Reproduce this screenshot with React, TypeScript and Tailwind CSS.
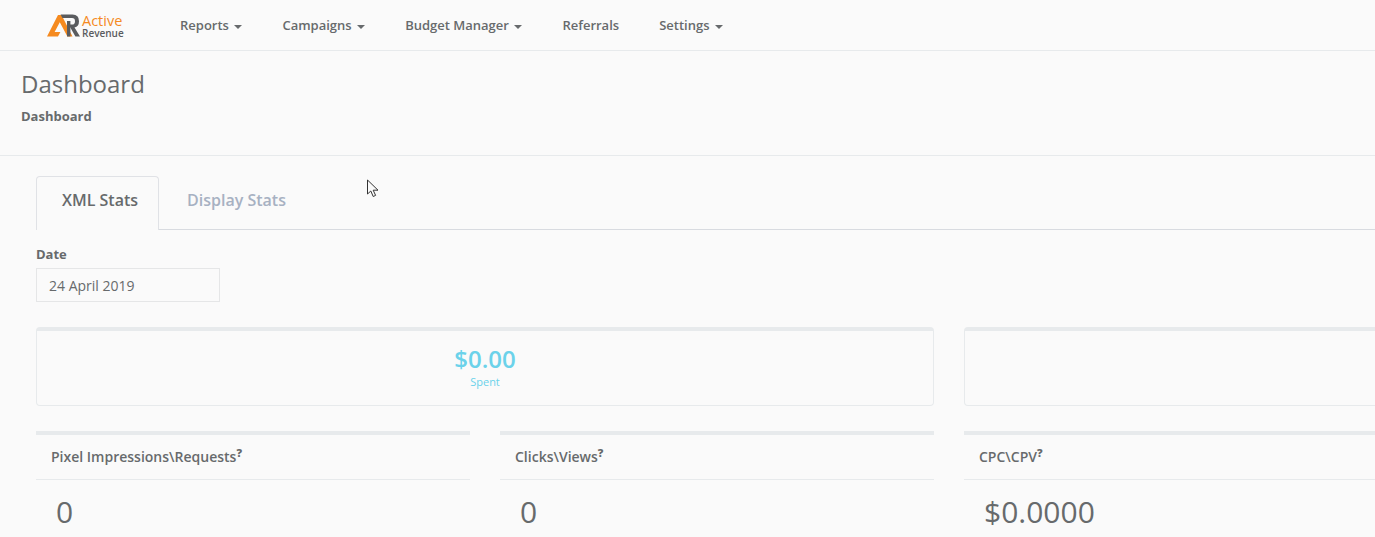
const navItems = [
  { label: "Reports", caret: true },
  { label: "Campaigns", caret: true },
  { label: "Budget Manager", caret: true },
  { label: "Referrals", caret: false },
  { label: "Settings", caret: true },
];

const stats = [
  { title: "Pixel Impressions\\Requests", value: "0" },
  { title: "Clicks\\Views", value: "0" },
  { title: "CPC\\CPV", value: "$0.0000" },
];

function Logo() {
  return (
    <div className="flex w-[76px] items-center">
      <svg width="35" height="23" viewBox="0 0 35 23" className="block shrink-0">
        <path d="M0 22.5 L11 1 L14.5 1 L25.5 22.5 L20.4 22.5 L12.8 8.2 L7.6 18 L13.4 18 L11 22.5 Z" fill="#f58a1f" />
        <path d="M13.6 0.5 L25.5 0.5 Q32 0.5 32 7.2 Q32 12.4 27.5 13.4 L33 22.5 L28.4 22.5 L21.6 10.6 L25 10.6 Q28 10.6 28 7.2 Q28 4 25 4 L15.4 4 Z" fill="#5a5c5f" />
        <path d="M20 7 L23.4 7 L23.4 22.5 L20 22.5 Z" fill="#5a5c5f" />
      </svg>
      <div className="flex flex-col">
        <span className="text-[14.5px] leading-[15px] font-medium text-[#f58a1f]">Active</span>
        <span className="text-[10px] leading-[10px] font-semibold text-[#5a5c5f]">Revenue</span>
      </div>
    </div>
  );
}

function StatCard({ title, value }: { title: string; value: string }) {
  return (
    <div className="border-t-4 border-[#e7eaec]">
      <div className="flex h-[45px] items-center border-b border-[#e7eaec] pb-[2px] pl-[15px] text-[14px] font-semibold text-[#676a6c]">
        <span>{title}</span>
        <span className="relative -top-[3px] text-[11px] leading-[10px] font-extrabold">?</span>
      </div>
      <div className="pl-5 pt-[11px] text-[30px] leading-[42px] text-[#676a6c]">{value}</div>
    </div>
  );
}

export default function App() {
  return (
    <div className="h-[537px] w-[1375px] overflow-hidden bg-[#fafafa] font-['Open_Sans',sans-serif] text-[#676a6c]">
      <nav className="flex h-[51px] items-center border-b border-[#e7eaec] pl-[47px]">
        <Logo />
        <ul className="ml-[57px] mt-[1px] flex gap-[40px] text-[13px] font-semibold">
          {navItems.map((item) => (
            <li key={item.label} className="flex items-center">
              {item.label}
              {item.caret ? (
                <span className="ml-[5.5px] mt-[2px] border-x-[4px] border-t-[4px] border-x-transparent border-t-[#676a6c]" />
              ) : null}
            </li>
          ))}
        </ul>
      </nav>

      <header className="h-[105px] border-b border-[#e7eaec] pl-[21px] pt-[16px]">
        <h2 className="text-[24px] leading-[33px]">Dashboard</h2>
        <p className="mt-[7px] text-[13px] leading-[18px] font-bold">Dashboard</p>
      </header>

      <main className="relative pl-[36px] pt-[20px]">
        <div className="flex h-[54px] border-b border-[#d8dbe0]">
          <div className="-mb-px flex h-[54px] w-[123px] items-center justify-center rounded-t-[4px] border border-b-0 border-[#e0e2e6] bg-[#fafafa] pb-[8px] pl-[5px] text-[16px] font-semibold">
            XML Stats
          </div>
          <div className="flex items-center pb-[6px] pl-[28px] text-[16px] font-semibold text-[#a7b1c2]">Display Stats</div>
        </div>

        <svg width="14" height="20" viewBox="0 0 14 20" className="absolute left-[366px] top-[23px]">
          <path d="M1.5 1 L1.5 15 L4.8 12 L7.2 17.5 L9.6 16.4 L7.2 11.2 L12 11.2 Z" fill="#fafafa" stroke="#333" strokeWidth="1" />
        </svg>

        <label className="mt-[15px] block text-[13px] leading-[18px] font-bold">Date</label>
        <div className="mt-[5px] flex h-[34px] w-[184px] items-center border border-[#e5e6e7] pl-[12px] text-[14px]">
          24 April 2019
        </div>

        <div className="mt-[25px] grid w-[1362px] grid-cols-3 gap-x-[30px] gap-y-[25px]">
          <div className="col-span-2 flex h-[79px] flex-col items-center rounded-[4px] border border-t-4 border-[#e7eaec] pt-[14px] text-[#6bd2ea]">
            <span className="text-[24px] leading-[28px] font-semibold">$0.00</span>
            <span className="pt-[1px] text-[11px] leading-[16px]">Spent</span>
          </div>
          <div className="h-[79px] rounded-[4px] border border-t-4 border-[#e7eaec]" />
          {stats.map((s) => (
            <StatCard key={s.title} {...s} />
          ))}
        </div>
      </main>
    </div>
  );
}
